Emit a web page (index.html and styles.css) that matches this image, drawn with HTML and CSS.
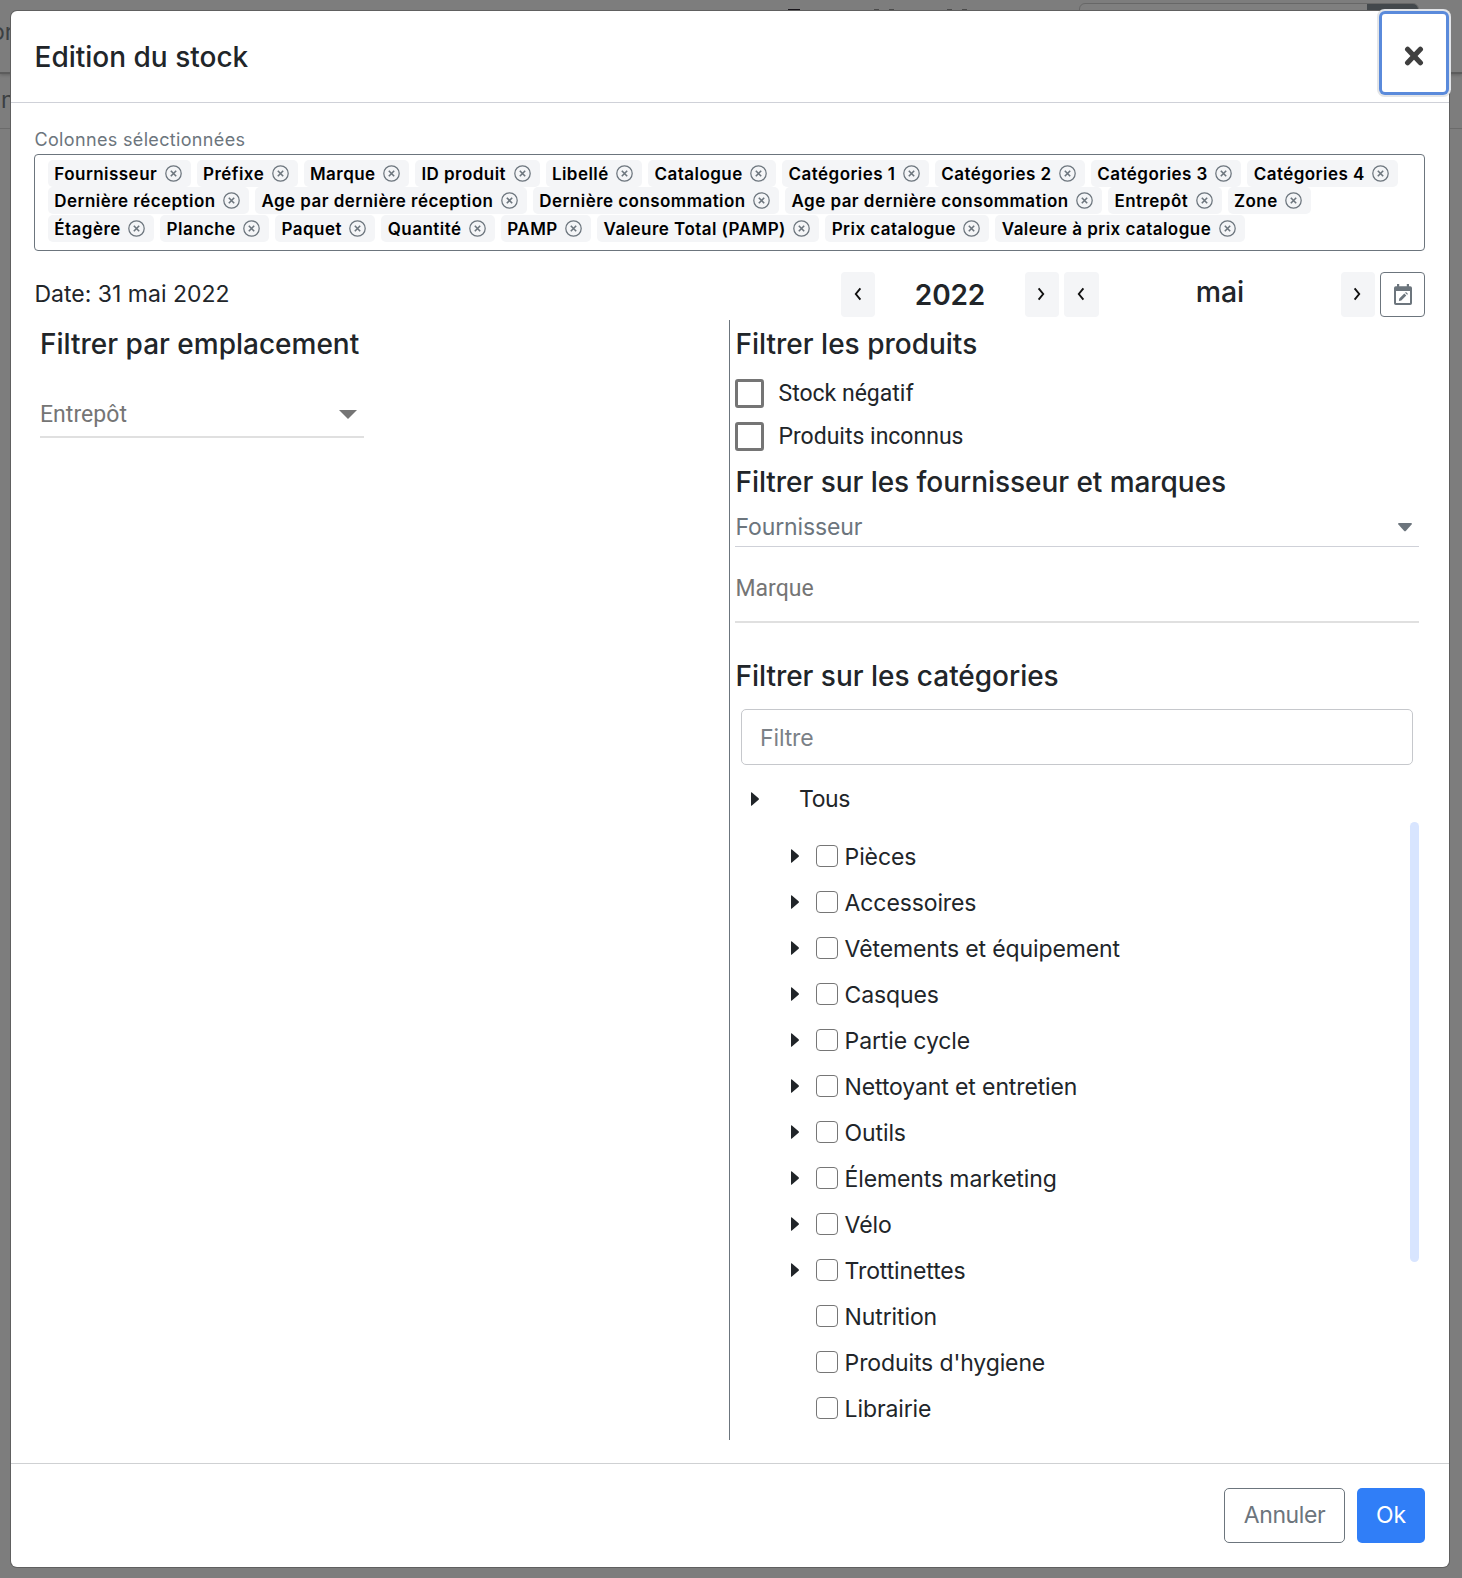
FILE: index.html
```html
<!DOCTYPE html>
<html lang="fr">
<head>
<meta charset="utf-8">
<title>Edition du stock</title>
<link rel="stylesheet" href="styles.css">
</head>
<body>
<svg class="defs" width="0" height="0" aria-hidden="true">
  <symbol id="remove" viewBox="0 0 17 17"><circle cx="8.5" cy="8.5" r="7.7" fill="none" stroke="currentColor" stroke-width="1.25"/><path d="M5.8 5.8l5.4 5.4M11.2 5.8l-5.4 5.4" fill="none" stroke="currentColor" stroke-width="1.6"/></symbol>
  <symbol id="left" viewBox="0 0 8 14"><path d="M6.4 1.4L1.8 7l4.6 5.6" fill="none" stroke="currentColor" stroke-width="1.9"/></symbol>
  <symbol id="right" viewBox="0 0 8 14"><path d="M1.6 1.4L6.2 7l-4.6 5.6" fill="none" stroke="currentColor" stroke-width="1.9"/></symbol>
  <symbol id="caret" viewBox="0 0 8 14"><path d="M0 .8Q0-.3.9.5L7.6 6.2Q8.3 7 7.6 7.8L.9 13.5Q0 14.3 0 13.2Z" fill="currentColor"/></symbol>
</svg>
<div class="page-behind" aria-hidden="true">
  <div class="topbar"><span class="cut cut-1">or</span><div class="search"><div class="search-btn"></div></div>
    <i class="speck s1"></i><i class="speck s2"></i><i class="speck s3"></i><i class="speck s4"></i><i class="speck s5"></i></div>
  <div class="subbar"><span class="cut cut-2">n</span></div>
</div>
<main class="dialog">
  <header class="dialog-header">
    <h1>Edition du stock</h1>
    <button class="close" aria-label="Fermer"><svg width="20" height="20" viewBox="0 0 20 20"><path d="M3.6 3.3l12.8 13.4M16.4 3.3L3.6 16.7" stroke="#3f3f3f" stroke-width="5.2" stroke-linecap="round"/></svg></button>
  </header>
  <section class="dialog-body">
    <label class="caption">Colonnes sélectionnées</label>
    <div class="chips">
      <div class="chip-row">
        <span class="chip">Fournisseur<svg><use href="#remove"/></svg></span><span class="chip">Préfixe<svg><use href="#remove"/></svg></span><span class="chip">Marque<svg><use href="#remove"/></svg></span><span class="chip">ID produit<svg><use href="#remove"/></svg></span><span class="chip">Libellé<svg><use href="#remove"/></svg></span><span class="chip">Catalogue<svg><use href="#remove"/></svg></span><span class="chip">Catégories 1<svg><use href="#remove"/></svg></span><span class="chip">Catégories 2<svg><use href="#remove"/></svg></span><span class="chip">Catégories 3<svg><use href="#remove"/></svg></span><span class="chip">Catégories 4<svg><use href="#remove"/></svg></span>
      </div>
      <div class="chip-row">
        <span class="chip">Dernière réception<svg><use href="#remove"/></svg></span><span class="chip">Age par dernière réception<svg><use href="#remove"/></svg></span><span class="chip">Dernière consommation<svg><use href="#remove"/></svg></span><span class="chip">Age par dernière consommation<svg><use href="#remove"/></svg></span><span class="chip">Entrepôt<svg><use href="#remove"/></svg></span><span class="chip">Zone<svg><use href="#remove"/></svg></span>
      </div>
      <div class="chip-row">
        <span class="chip">Étagère<svg><use href="#remove"/></svg></span><span class="chip">Planche<svg><use href="#remove"/></svg></span><span class="chip">Paquet<svg><use href="#remove"/></svg></span><span class="chip">Quantité<svg><use href="#remove"/></svg></span><span class="chip">PAMP<svg><use href="#remove"/></svg></span><span class="chip">Valeure Total (PAMP)<svg><use href="#remove"/></svg></span><span class="chip">Prix catalogue<svg><use href="#remove"/></svg></span><span class="chip">Valeure à prix catalogue<svg><use href="#remove"/></svg></span>
      </div>
    </div>
    <div class="date-row">
      <span class="date">Date: 31 mai 2022</span>
      <div class="stepper year"><button class="step"><svg><use href="#left"/></svg></button><strong>2022</strong><button class="step"><svg><use href="#right"/></svg></button></div>
      <div class="stepper month"><button class="step wide"><svg><use href="#left"/></svg></button><span>mai</span><button class="step"><svg><use href="#right"/></svg></button></div>
      <button class="calendar" aria-label="Calendrier"><svg width="18" height="21" viewBox="0 0 18 21"><path fill="#6c757d" fill-rule="evenodd" d="M3 0h2.2v2.2h7.6V0H15v2.2h1.2Q18 2.2 18 4v15.200Q18 21 16.200 21H1.800Q0 21 0 19.200V4Q0 2.200 1.800 2.200H3ZM2 7v12h14V7Z"/><path d="M4.900 17l.4-2.400 5-5 2 2-5 5ZM11.100 8.800l.9-.9 2 2-.9.9Z" fill="#6c757d"/></svg></button>
    </div>
    <div class="filters">
      <section class="location">
        <h2>Filtrer par emplacement</h2>
        <div class="mat-select"><span>Entrepôt</span><svg width="18" height="9" viewBox="0 0 18 9"><path d="M0 0h18L9 9Z" fill="#757575"/></svg></div>
      </section>
      <section class="products">
        <h2>Filtrer les produits</h2>
        <label class="mat-check"><i></i>Stock négatif</label>
        <label class="mat-check"><i></i>Produits inconnus</label>
        <h2 class="h-brand">Filtrer sur les fournisseur et marques</h2>
        <div class="supplier"><span>Fournisseur</span><svg width="14" height="9" viewBox="0 0 14 9"><path d="M1 0h12q1.500.2.600 1.400L8 7.700q-1 1-2 0L.4 1.400Q-.5.200 1 0Z" fill="#6c757d"/></svg></div>
        <div class="brand">Marque</div>
        <h2 class="h-cat">Filtrer sur les catégories</h2>
        <input class="filter" type="text" placeholder="Filtre">
        <div class="root"><svg class="caret"><use href="#caret"/></svg><span>Tous</span></div>
        <div class="tree">
          <ul>
            <li><svg class="caret"><use href="#caret"/></svg><i></i><span>Pièces</span></li>
            <li><svg class="caret"><use href="#caret"/></svg><i></i><span>Accessoires</span></li>
            <li><svg class="caret"><use href="#caret"/></svg><i></i><span>Vêtements et équipement</span></li>
            <li><svg class="caret"><use href="#caret"/></svg><i></i><span>Casques</span></li>
            <li><svg class="caret"><use href="#caret"/></svg><i></i><span>Partie cycle</span></li>
            <li><svg class="caret"><use href="#caret"/></svg><i></i><span>Nettoyant et entretien</span></li>
            <li><svg class="caret"><use href="#caret"/></svg><i></i><span>Outils</span></li>
            <li><svg class="caret"><use href="#caret"/></svg><i></i><span>Élements marketing</span></li>
            <li><svg class="caret"><use href="#caret"/></svg><i></i><span>Vélo</span></li>
            <li><svg class="caret"><use href="#caret"/></svg><i></i><span>Trottinettes</span></li>
            <li class="leaf"><i></i><span>Nutrition</span></li>
            <li class="leaf"><i></i><span>Produits d'hygiene</span></li>
            <li class="leaf"><i></i><span>Librairie</span></li>
          </ul>
          <div class="scroll-thumb"></div>
        </div>
      </section>
    </div>
  </section>
  <footer class="dialog-footer">
    <button class="btn cancel">Annuler</button>
    <button class="btn ok">Ok</button>
  </footer>
</main>
</body>
</html>
```
FILE: styles.css
```css
* { box-sizing: border-box; }
body {
  margin: 0;
  height: 1578px;
  padding: 11px 13px 11px 11px;
  overflow: hidden;
  background: #7d7d7d;
  color: #212529;
  font: 400 23px/34px Inter, "Liberation Sans", sans-serif;
  letter-spacing: -0.12px;
}
button { margin: 0; padding: 0; border: 0; font: inherit; letter-spacing: inherit; color: inherit; }
svg { display: block; flex: none; }
.defs { position: absolute; }
h1, h2 { margin: 0; font-size: 28px; font-weight: 500; line-height: 34px; letter-spacing: 0; }

/* Dimmed page under the dialog */
.page-behind { position: absolute; inset: 0 0 auto 0; height: 140px; overflow: hidden; color: #3b3f42; }
.topbar { position: relative; height: 74px; border-bottom: 2px solid #5c5c5c; box-shadow: 0 1px 3px #626262; }
.subbar { position: relative; height: 55px; border-bottom: 1px solid #6b6b6b; }
.cut { position: absolute; }
.cut-1 { left: -9px; top: 15px; }
.cut-2 { left: 1px; top: 9px; }
.search { position: absolute; left: 1079px; top: 3px; width: 340px; height: 40px; border: 1px solid #676767; border-radius: 6px; background: #7f7f7f; overflow: hidden; }
.search-btn { margin-left: 287px; height: 40px; background: #43484c; }
.speck { position: absolute; top: 9px; width: 5px; height: 2px; background: #4a4a4a; }
.s1 { left: 788px; width: 12px; background: #171419; }
.s2 { left: 874px; }
.s3 { left: 889px; }
.s4 { left: 947px; }
.s5 { left: 962px; }

.dialog {
  position: relative;
  display: flex;
  flex-direction: column;
  height: 1556px;
  background: #fff;
  border-radius: 6px;
  box-shadow: 0 0 0 1px #606060;
}
.dialog-header {
  display: flex;
  justify-content: space-between;
  height: 92px;
  padding: 29px 0 0 23.5px;
  border-bottom: 1px solid #cfd1d8;
}
.close {
  display: flex;
  align-items: center;
  justify-content: center;
  width: 64px;
  height: 78px;
  margin: -26px 3px 0 0;
  padding-top: 6px;
  background: #fff;
  border-radius: 3px;
  box-shadow: 0 0 0 3px #5a8adb, 0 0 0 5px #e3e5e8;
}
.dialog-body { flex: 1; padding: 20px 24px 0 23px; }
.caption { display: block; height: 31px; padding-left: 0.5px; color: #6c757d; font-size: 18px; line-height: 33px; letter-spacing: 0.34px; }

.chips { height: 97px; padding: 5px 0 0 13px; border: 1px solid #6c757d; border-radius: 4px; }
.chip-row { display: flex; gap: 6px; height: 27px; }
.chip-row:last-child { margin-top: 1px; }
.chip {
  display: flex;
  align-items: center;
  height: 27px;
  padding: 0 9px 0 6.3px;
  background: #f4f5f7;
  border-radius: 5px;
  color: #000;
  font-size: 17px;
  font-weight: 600;
  letter-spacing: 0.46px;
  white-space: nowrap;
}
.chip svg { width: 17px; height: 17px; margin-left: 7.5px; color: #6c757d; }

.date-row { display: flex; height: 45px; margin-top: 21px; }
.date { flex: 1; padding: 5px 0 0 0.5px; letter-spacing: 0; }
.stepper { display: flex; justify-content: space-between; }
.year { width: 218px; margin-right: 5px; }
.month { width: 311px; margin-right: 5px; }
.year strong { font-size: 28px; font-weight: 600; line-height: 46px; }
.month span { font-size: 28.500px; font-weight: 500; line-height: 39px; }
.step { display: flex; align-items: center; justify-content: center; width: 34px; height: 45px; background: #f4f5f7; border-radius: 4px; color: #111; }
.step.wide { width: 35px; }
.step svg { width: 8px; height: 14px; margin: 0 1px 1px 0; }
.calendar { display: flex; align-items: center; justify-content: center; width: 45px; height: 45px; background: #fff; border: 1px solid #6c757d; border-radius: 4px; }

.filters { display: grid; grid-template-columns: 695px 1fr; height: 1120px; margin-top: 3px; }
.location { padding: 7px 0 0 6px; }
.mat-select {
  display: flex;
  align-items: center;
  justify-content: space-between;
  width: 324px;
  height: 50px;
  margin-top: 27px;
  padding: 5px 7px 0 0;
  border-bottom: 2px solid #e0e0e0;
  color: #757575;
  font-family: Roboto, sans-serif;
  letter-spacing: 0.05px;
}
.products { padding: 7px 6px 0 5px; border-left: 1px solid #6c757d; }
.products h2 { padding-left: 0.5px; }
.mat-check { display: flex; align-items: center; gap: 14.5px; height: 43px; font-family: Roboto, sans-serif; letter-spacing: 0; }
.products h2 + .mat-check { margin-top: 11px; }
.mat-check i { width: 29px; height: 29px; border: 3px solid #757575; border-radius: 3px; }
.products .h-brand { margin-top: 7px; letter-spacing: -0.05px; }
.supplier { display: flex; align-items: center; justify-content: space-between; height: 48px; padding: 9px 7.5px 0 0.5px; border-bottom: 1px solid #cfd1d8; color: #6c757d; }
.brand { height: 76px; padding: 25px 0 0 0.5px; border-bottom: 2px solid #e0e0e0; color: #757575; font-family: Roboto, sans-serif; letter-spacing: 0; }
.products .h-cat { margin-top: 36px; letter-spacing: -0.03px; }
.filter {
  display: block;
  width: calc(100% - 12px);
  height: 56px;
  margin: 16px 6px 0;
  padding: 2px 18px 0;
  border: 1px solid #c6c8cc;
  border-radius: 5px;
  font: inherit;
  letter-spacing: inherit;
  background: #fff;
}
.filter::placeholder { color: #7b8187; opacity: 1; }
.caret { width: 8px; height: 14px; }
.root { display: flex; align-items: center; height: 57px; padding: 11px 0 0 16px; letter-spacing: -0.4px; }
.root .caret { margin: 0 40px 1px 0; }
.tree { display: flex; justify-content: space-between; }
.tree ul { margin: 0; padding: 11px 0 0 56px; list-style: none; }
.tree li { display: flex; align-items: center; height: 46px; }
.tree li.leaf { padding-left: 25px; }
.tree li i { width: 22px; height: 22px; margin-right: 6.6px; border: 1.500px solid #767676; border-radius: 4px; }
.tree li span { padding-top: 2px; }
.tree .caret { margin-right: 17px; margin-bottom: 0; }
.scroll-thumb { width: 9px; height: 440px; border-radius: 5px; background: #d8e5ff; }

.dialog-footer { display: flex; justify-content: flex-end; gap: 12px; height: 104px; padding: 24px 24px 0; border-top: 1px solid #cfd1d3; }
.btn { height: 55px; padding-bottom: 2px; border-radius: 5px; }
.cancel { width: 121px; border: 1px solid #6c757d; background: #fff; color: #6c757d; letter-spacing: -0.400px; }
.ok { width: 68px; background: #307ef7; color: #fff; letter-spacing: -0.2px; }
```
